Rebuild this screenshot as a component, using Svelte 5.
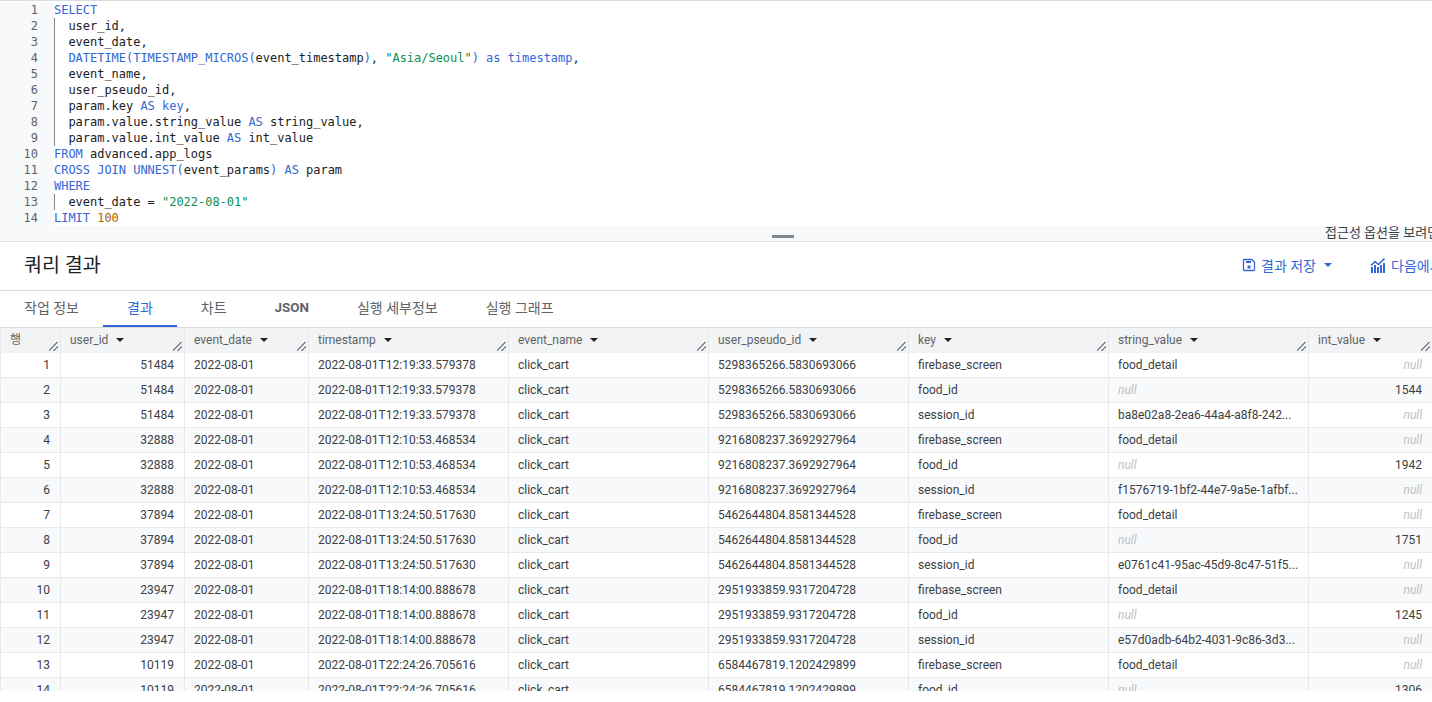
<script>
  const cols = [
    { name: 'user_id', cls: 'c1' },
    { name: 'event_date', cls: 'c2' },
    { name: 'timestamp', cls: 'c3' },
    { name: 'event_name', cls: 'c4' },
    { name: 'user_pseudo_id', cls: 'c5' },
    { name: 'key', cls: 'c6' },
    { name: 'string_value', cls: 'c7' },
    { name: 'int_value', cls: 'c8' }
  ];
  const groups = [
    ['51484', '2022-08-01T12:19:33.579378', '5298365266.5830693066', 'ba8e02a8-2ea6-44a4-a8f8-242...', '1544'],
    ['32888', '2022-08-01T12:10:53.468534', '9216808237.3692927964', 'f1576719-1bf2-44e7-9a5e-1afbf...', '1942'],
    ['37894', '2022-08-01T13:24:50.517630', '5462644804.8581344528', 'e0761c41-95ac-45d9-8c47-51f5...', '1751'],
    ['23947', '2022-08-01T18:14:00.888678', '2951933859.9317204728', 'e57d0adb-64b2-4031-9c86-3d3...', '1245'],
    ['10119', '2022-08-01T22:24:26.705616', '6584467819.1202429899', '', '1306']
  ];
  const rows = [];
  groups.forEach((g) => {
    [['firebase_screen', 'food_detail', null], ['food_id', null, g[4]], ['session_id', g[3], null]].forEach((k) => {
      if (rows.length < 14) rows.push({ n: rows.length + 1, uid: g[0], ts: g[1], pid: g[2], key: k[0], str: k[1], int: k[2] });
    });
  });
  const lineNumbers = Array.from({ length: 14 }, (_, i) => i + 1);
  const tabs = ['작업 정보', '결과', '차트', 'JSON', '실행 세부정보', '실행 그래프'];
</script>

<div class="page">
  <section class="editor">
    <div class="gutter">
      {#each lineNumbers as n}<div class="ln">{n}</div>{/each}
    </div>
    <pre class="code"><span class="k">SELECT</span>
<span class="in"></span>user_id,
<span class="in"></span>event_date,
<span class="in"></span><span class="k">DATETIME(TIMESTAMP_MICROS(</span>event_timestamp<span class="k">)</span>, <span class="s">"Asia/Seoul"</span><span class="k">) as timestamp</span>,
<span class="in"></span>event_name,
<span class="in"></span>user_pseudo_id,
<span class="in"></span>param.key <span class="k">AS key</span>,
<span class="in"></span>param.value.string_value <span class="k">AS</span> string_value,
<span class="in"></span>param.value.int_value <span class="k">AS</span> int_value
<span class="k">FROM</span> advanced.app_logs
<span class="k">CROSS JOIN UNNEST(</span>event_params<span class="k">) AS</span> param
<span class="k">WHERE</span>
<span class="in"></span>event_date = <span class="s">"2022-08-01"</span>
<span class="k">LIMIT</span> <span class="num">100</span></pre>
  </section>

  <div class="splitter">
    <div class="handle"></div>
    <div class="a11y">접근성 옵션을 보려면</div>
  </div>

  <header class="title-bar">
    <h1>쿼리 결과</h1>
    <div class="actions">
      <button class="act save">
        <svg width="14" height="14" viewBox="0 0 14 14" fill="none">
          <path d="M2 1.5h7.7l2.8 2.8v7.2a1 1 0 0 1-1 1H2a.5.5 0 0 1-.5-.5V2a.5.5 0 0 1 .5-.5z" stroke="#3367d6" stroke-width="1.3"/>
          <rect x="4" y="3" width="5" height="2" fill="#3367d6"/>
          <rect x="5.5" y="7.5" width="3" height="3" fill="#3367d6"/>
        </svg>
        <span>결과 저장</span>
        <i class="caret blue"></i>
      </button>
      <button class="act next">
        <svg width="16" height="16" viewBox="0 0 16 16" fill="#3367d6">
          <rect x="1" y="10" width="2" height="6"/><rect x="4" y="8" width="2" height="8"/><rect x="7" y="10" width="2" height="6"/><rect x="10" y="8" width="2" height="8"/><rect x="13" y="6" width="2" height="10"/>
          <path d="M1 8.5l4-4 3.5 3L14.5 1.5" fill="none" stroke="#3367d6" stroke-width="1.6"/>
        </svg>
        <span>다음에서 데이터 탐색</span>
      </button>
    </div>
  </header>

  <nav class="tabs">
    {#each tabs as t, i}
      <div class="tab" class:active={i === 1} class:json={t === 'JSON'}>{t}</div>
    {/each}
  </nav>

  <div class="results">
    <div class="row head">
      <div class="cell c0 hd">행<i class="grip"></i></div>
      {#each cols as c}
        <div class="cell hd {c.cls}">{c.name}<i class="caret"></i><i class="grip"></i></div>
      {/each}
    </div>
    {#each rows as r}
      <div class="row" class:alt={r.n % 2 === 0}>
        <div class="cell c0 num-cell">{r.n}</div>
        <div class="cell c1 right">{r.uid}</div>
        <div class="cell c2">2022-08-01</div>
        <div class="cell c3">{r.ts}</div>
        <div class="cell c4">click_cart</div>
        <div class="cell c5">{r.pid}</div>
        <div class="cell c6">{r.key}</div>
        <div class="cell c7" class:null={r.str === null}>{r.str ?? 'null'}</div>
        <div class="cell c8 right" class:null={r.int === null}>{r.int ?? 'null'}</div>
      </div>
    {/each}
  </div>
</div>

<style>
  :global(body) { margin: 0; background: #fff; overflow: hidden; }
  .page {
    width: 1432px; height: 702px; overflow: hidden; background: #fff;
    font-family: Roboto, "Noto Sans CJK KR", sans-serif; color: #3c4043;
  }
  .editor { display: flex; height: 226px; box-sizing: border-box; padding-top: 2px; box-shadow: inset 0 1px 0 #dadce0; }
  .gutter { width: 54px; flex: none; background: #f8f9fa; box-sizing: border-box; padding-right: 16px; text-align: right; }
  .ln { height: 16px; font: 12px/16px "DejaVu Sans Mono", monospace; color: #5f6368; }
  .code { margin: 0; font: 12px/16px "DejaVu Sans Mono", monospace; letter-spacing: -0.024px; color: #202124; }
  .in { display: inline-block; width: 14.4px; height: 16px; box-sizing: border-box; border-left: 1px solid #80868b; vertical-align: top; }
  .k { color: #3367d6; }
  .s { color: #0d904f; }
  .num { color: #b06000; }
  .splitter { position: relative; display: flow-root; height: 16px; box-sizing: border-box; background: #f8f9fa; border-bottom: 1px solid #dadce0; }
  .handle { width: 22px; height: 3px; margin: 9px 0 0 772px; background: #80868b; }
  .a11y { position: absolute; left: 1325px; top: -1px; white-space: nowrap; font-size: 13px; line-height: 15px; color: #3c4043; }
  .title-bar { height: 49px; box-sizing: border-box; border-bottom: 1px solid #dadce0; display: flex; align-items: center; padding: 0 0 5px 24px; }
  h1 { margin: 0; font-size: 19.5px; font-weight: 400; color: #202124; }
  .actions { display: flex; align-items: center; margin-left: auto; width: 190px; gap: 38px; white-space: nowrap; padding-top: 3px; }
  .act { all: unset; display: flex; align-items: center; gap: 5px; font-size: 14px; color: #3367d6; font-family: Roboto, "Noto Sans CJK KR", sans-serif; }
  .tabs { height: 36px; display: flex; border-bottom: 1px solid #dadce0; box-sizing: content-box; }
  .tab { padding: 0 24px; line-height: 34px; font-size: 14px; color: #5f6368; height: 36px; box-sizing: border-box; }
  .tab.active { color: #3367d6; border-bottom: 2px solid #3367d6; }
  .tab.json { font-weight: 700; font-size: 13.4px; }
  .results { height: 363px; overflow: hidden; }
  .row { display: flex; height: 25px; box-sizing: border-box; border-bottom: 1px solid #e8eaed; font-size: 12px; line-height: 25px; color: #3c4043; }
  .row.alt { background: #f8f9fa; }
  .row.head { background: #f1f3f4; border-bottom: 0; color: #5f6368; }
  .cell { position: relative; box-sizing: border-box; padding: 0 10px 0 9px; flex: none; border-left: 1px solid #e8eaed; white-space: nowrap; overflow: hidden; }
  .hd { display: flex; align-items: center; gap: 8px; padding-bottom: 1px; }
  .c0 { width: 60px; }
  .num-cell { text-align: right; }
  .c1, .c2, .c8 { width: 124px; }
  .c3, .c4, .c5, .c6, .c7 { width: 200px; }
  .right { text-align: right; }
  .null { color: #bdc1c6; font-style: italic; }
  .caret { display: inline-block; width: 0; height: 0; border-left: 4px solid transparent; border-right: 4px solid transparent; border-top: 4px solid #202124; }
  .caret.blue { border-top-color: #3367d6; margin-left: 3px; }
  .grip { position: absolute; right: 2px; bottom: 2px; width: 9px; height: 9px; background: linear-gradient(135deg, transparent 44%, #80868b 44%, #80868b 52%, transparent 52%, transparent 70%, #80868b 70%, #80868b 78%, transparent 78%); }
</style>
